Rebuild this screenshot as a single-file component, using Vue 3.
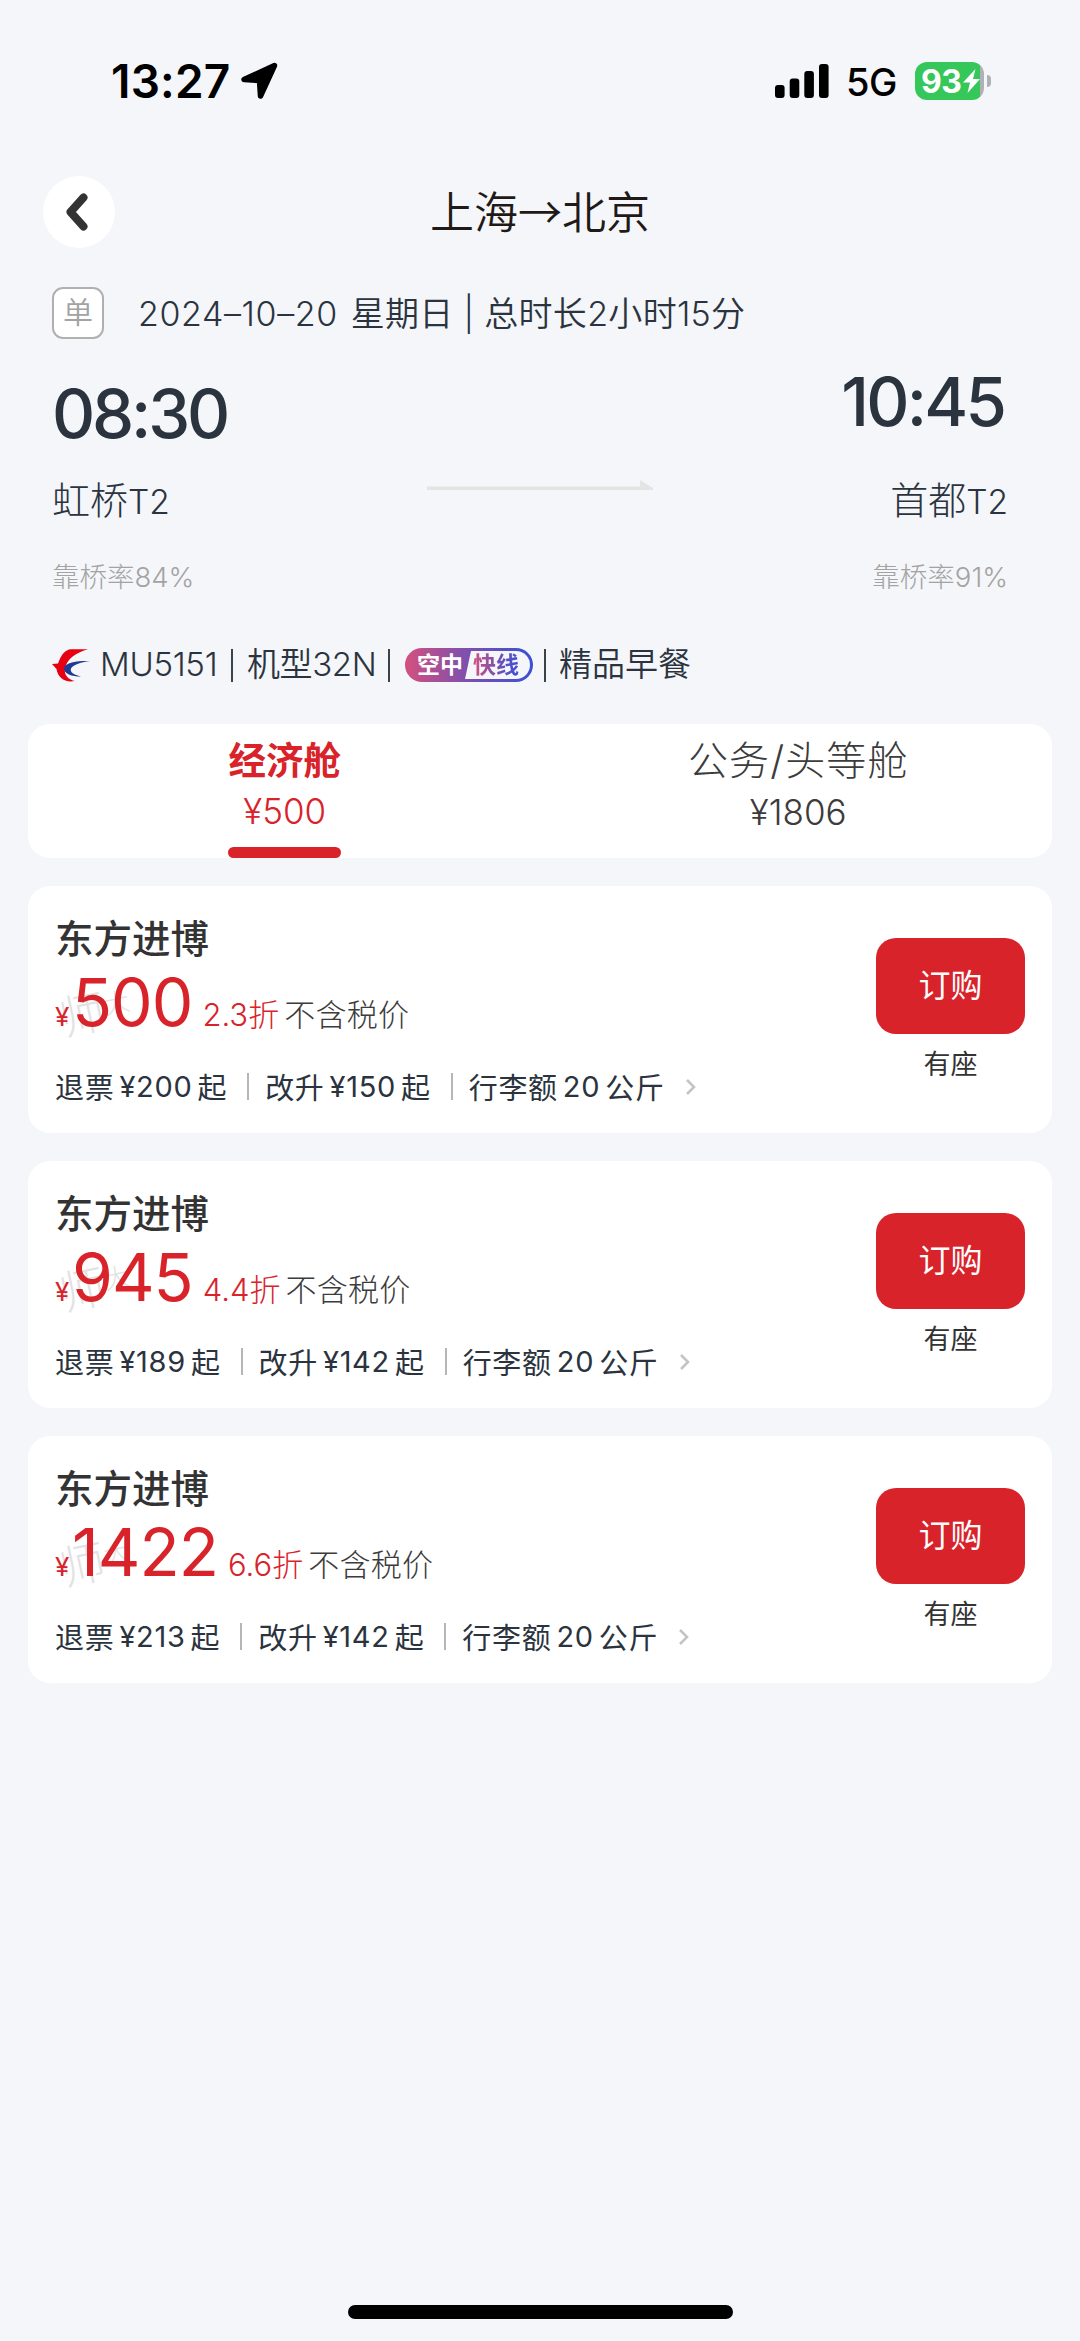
<script setup>
const fares = [
  { name: '东方进博', price: '500', discount: '2.3折', refund: '200', change: '150' },
  { name: '东方进博', price: '945', discount: '4.4折', refund: '189', change: '142' },
  { name: '东方进博', price: '1422', discount: '6.6折', refund: '213', change: '142' },
]
</script>

<template>
  <div class="page">
    <header class="status">
      <div class="clock">
        <span class="time">13:27</span>
        <svg class="loc" width="38" height="38" viewBox="0 0 38 38">
          <path d="M3 17.500 L33.500 3.500 L19.500 34 L18.500 18.500 Z" stroke="#000" stroke-width="5.500" stroke-linejoin="round" />
        </svg>
      </div>
      <div class="indicators">
        <svg width="54" height="34" viewBox="0 0 54 34">
          <rect x="0" y="21" width="9.6" height="13" rx="3" />
          <rect x="14.7" y="14.5" width="9.6" height="19.5" rx="3" />
          <rect x="29.3" y="7" width="9.6" height="27" rx="3" />
          <rect x="44" y="0" width="9.6" height="34" rx="3" />
        </svg>
        <span class="net">5G</span>
        <div class="battery">
          <span class="level">93</span>
          <svg width="17" height="24" viewBox="0 0 17 24"><path d="M12.5 0 L0 13.5 H7 L4.5 24 L17 10 H10 Z" fill="#fff" /></svg>
        </div>
        <span class="nub"></span>
      </div>
    </header>

    <nav class="bar">
      <button class="back">
        <svg width="22" height="38" viewBox="0 0 22 38">
          <path d="M17.500 4.500 L4.500 19 L17.500 33.500" fill="none" stroke="#333" stroke-width="8" stroke-linecap="round" stroke-linejoin="round" />
        </svg>
      </button>
      <h1>上海→北京</h1>
    </nav>

    <div class="summary">
      <span class="oneway">单</span>
      <span class="date"><span class="day">2024–10–20</span> <span class="week">星期日</span> | 总时长2小时15分</span>
    </div>

    <section class="route">
      <div class="stop left">
        <div class="hour">08:30</div>
        <div class="airport">虹桥<span>T2</span></div>
        <div class="rate">靠桥率84%</div>
      </div>
      <svg class="arrow" width="226" height="10" viewBox="0 0 226 10">
        <path d="M0 6.5 H213 V0 L226 8 V10 H0 Z" fill="#e4e4e4" />
      </svg>
      <div class="stop right">
        <div class="hour">10:45</div>
        <div class="airport">首都<span>T2</span></div>
        <div class="rate">靠桥率91%</div>
      </div>
    </section>

    <section class="flight">
      <svg class="logo" width="38" height="33" viewBox="0 0 38 33">
        <path d="M0 15 L6 14.500 C8 9 11 3 15 1.500 Q16.500 0.300 19 0.300 H36 C27 3 19 7 15 14 C10 23 14 30 23 32 C13 34 6 29 4.500 20 Z" fill="#e60012" />
        <path d="M38 12 C28 11.500 13 13 12 19 C11.500 25 20 27.500 29 27.500 C22 26 17.500 23 19 19.500 C21 16 28 13.500 38 12 Z" fill="#1d3a94" />
      </svg>
      <span class="no">MU5151</span>
      <i></i>
      <span class="type">机型32N</span>
      <i></i>
      <span class="express"><b class="air">空中</b><span class="line"><b>快线</b></span></span>
      <i></i>
      <span class="meal">精品早餐</span>
    </section>

    <section class="tabs">
      <div class="tab active">
        <div class="cabin">经济舱</div>
        <div class="from">¥500</div>
        <div class="underline"></div>
      </div>
      <div class="tab">
        <div class="cabin">公务/头等舱</div>
        <div class="from">¥1806</div>
      </div>
    </section>

    <section v-for="(f, i) in fares" :key="i" class="fare">
      <div class="info">
        <div class="name">{{ f.name }}</div>
        <div class="price">
          <span class="mark">师<small>大</small></span>
          <span class="yen">¥</span><span class="amount">{{ f.price }}</span>
          <span class="discount">{{ f.discount }}</span>
          <span class="tax">不含税价</span>
        </div>
        <div class="rules">
          <span>退票</span><span class="num">¥{{ f.refund }}</span><span>起</span>
          <i></i>
          <span>改升</span><span class="num">¥{{ f.change }}</span><span>起</span>
          <i></i>
          <span>行李额</span><span class="num">20</span><span>公斤</span>
          <svg class="more" width="10" height="16" viewBox="0 0 10 16"><path d="M1 1 L8 8 L1 15" fill="none" stroke="#c4c4c4" stroke-width="2.600" /></svg>
        </div>
      </div>
      <div class="action">
        <button class="book">订购</button>
        <div class="seat">有座</div>
      </div>
    </section>

    <footer class="home"><span></span></footer>
  </div>
</template>

<style>
body {
  background: #f4f6fa;
}
</style>

<style scoped>
.page {
  width: 1080px;
  height: 2341px;
  box-sizing: border-box;
  display: flex;
  flex-direction: column;
  overflow: hidden;
  background: #f4f6fa;
  color: #2b343e;
  font-family: Inter, "Noto Sans CJK SC", sans-serif;
  font-weight: 350;
  white-space: nowrap;
}
button {
  border: 0;
  padding: 0;
  font-family: inherit;
}
.status {
  display: flex;
  justify-content: space-between;
  align-items: center;
  height: 162px;
  padding: 0 89px 0 111px;
  color: #000;
}
.clock {
  display: flex;
  align-items: center;
  gap: 10px;
}
.time {
  font-size: 46px;
  font-weight: 600;
  width: 120px;
  letter-spacing: 0.2px;
}
.indicators {
  display: flex;
  align-items: center;
}
.net {
  margin-left: 17px;
  width: 51px;
  margin-right: 18px;
  font-size: 38px;
  font-weight: 500;
  line-height: 44px;
  padding-top: 2px;
  letter-spacing: -0.5px;
}
.battery {
  width: 69px;
  height: 38px;
  box-sizing: border-box;
  padding-left: 6px;
  border-radius: 12px;
  background: linear-gradient(90deg, #35c759 65px, #b0b1b4 65px);
  display: flex;
  align-items: center;
  gap: 1px;
}
.level {
  color: #fff;
  font-size: 32px;
  font-weight: 700;
  letter-spacing: -0.5px;
  width: 41px;
}
.nub {
  width: 4px;
  height: 12px;
  margin-left: 3px;
  border-radius: 0 4px 4px 0;
  background: #b0b1b4;
}
.bar {
  display: grid;
  grid-template-columns: 72px 1fr 72px;
  align-items: center;
  height: 99px;
  padding: 0 43px;
}
.back {
  width: 72px;
  height: 72px;
  border-radius: 50%;
  background: #fff;
  display: flex;
  align-items: center;
  justify-content: center;
  padding-right: 5px;
}
h1 {
  margin: 0 0 3px;
  text-align: center;
  font: 350 44px/60px "Noto Sans CJK SC", sans-serif;
  color: #1f1a17;
}
.summary {
  display: flex;
  align-items: center;
  height: 52px;
  margin-top: 26px;
  padding-left: 52px;
}
.oneway {
  width: 52px;
  height: 52px;
  box-sizing: border-box;
  border: 2px solid #b0b0b0;
  border-radius: 11px;
  background: #fff;
  color: #a3a3a3;
  font-size: 30px;
  line-height: 47px;
  text-align: center;
}
.date {
  margin: -4px 0 0 34px;
  font-size: 34px;
  letter-spacing: 0.3px;
}
.day {
  letter-spacing: 0.6px;
}
.week {
  margin-left: 3px;
}
.route {
  display: flex;
  height: 270px;
  padding: 0 72px 0 52px;
  align-items: flex-start;
}
.left {
  width: 375px;
}
.hour {
  margin-top: 43px;
  font-size: 67px;
  line-height: 64px;
  font-weight: 500;
  letter-spacing: -3.2px;
}
.airport {
  margin-top: 29px;
  font-size: 38px;
  line-height: 50px;
  font-weight: 300;
}
.airport span {
  font-size: 33.5px;
}
.rate {
  margin-top: 30px;
  font-size: 27.5px;
  line-height: 40px;
  font-weight: 300;
  color: #a3a3a3;
}
.right {
  flex: 1;
  text-align: right;
}
.right .hour {
  margin-top: 31px;
  padding-right: 4px;
  letter-spacing: -2.800px;
}
.right .airport {
  margin-top: 41px;
}
.arrow {
  margin-top: 141px;
}
.flight {
  display: flex;
  align-items: center;
  height: 40px;
  margin-top: 36px;
  padding-left: 52px;
  font-size: 33px;
}
.flight i {
  width: 2px;
  height: 33px;
  background: #3a434c;
}
.no,
.type,
.meal {
  line-height: 40px;
  margin-top: -2px;
}
.no {
  margin-left: 10px;
  width: 131px;
  letter-spacing: -0.3px;
}
.type {
  margin-left: 14px;
  width: 141px;
  letter-spacing: -0.4px;
}
.express {
  margin: 0 11px 0 15px;
  width: 128px;
  height: 34px;
  box-sizing: border-box;
  border-radius: 17px;
  padding: 3px;
  display: flex;
  background: linear-gradient(90deg, #d4507e, #7a50b0 50%, #3a4fd8);
  font-size: 23px;
  line-height: 28px;
}
.air {
  width: 57px;
  padding-left: 9px;
  box-sizing: border-box;
  color: #fff;
}
.line {
  width: 65px;
  padding-left: 8px;
  box-sizing: border-box;
  background: #f4f6fa;
  border-radius: 5px 14px 14px 0;
  clip-path: polygon(6px 0, 100% 0, 100% 100%, 0 100%);
}
.line b {
  background: linear-gradient(90deg, #d4507e, #7a50b0 50%, #3a4fd8);
  background-clip: text;
  color: transparent;
}
.meal {
  margin-left: 13px;
}
.tabs {
  display: flex;
  height: 134px;
  margin: 39px 28px 0;
  border-radius: 22px;
  background: #fff;
}
.tab {
  flex: 1;
  display: flex;
  flex-direction: column;
  align-items: center;
  color: #3c3c3c;
}
.tab:last-child {
  padding-left: 6px;
}
.cabin {
  margin-top: 12px;
  font-size: 40px;
  line-height: 50px;
  font-weight: 300;
  letter-spacing: 1.1px;
}
.from {
  margin-top: 3px;
  font-size: 35px;
  line-height: 46px;
}
.active {
  padding-left: 3px;
  color: #d9232b;
}
.active .cabin {
  font-size: 37.5px;
  font-weight: 700;
  letter-spacing: 0;
}
.active .from {
  margin-top: 2px;
}
.underline {
  width: 113px;
  height: 11px;
  margin-top: 13px;
  border-radius: 6px;
  background: #d9232b;
}
.fare {
  display: flex;
  justify-content: space-between;
  height: 247px;
  margin: 28px 28px 0;
  box-sizing: border-box;
  padding: 0 27px;
  border-radius: 22px;
  background: #fff;
}
.name {
  margin-top: 28px;
  font-size: 38.5px;
  line-height: 50px;
  font-weight: 500;
  color: #333;
}
.price {
  position: relative;
  display: flex;
  align-items: baseline;
  height: 77px;
  line-height: 77px;
  color: #d9232b;
}
.mark {
  position: absolute;
  left: 4px;
  top: 23px;
  color: #e2e2e2;
  font-size: 46px;
  line-height: 50px;
  font-weight: 300;
  transform: rotate(-12deg);
}
.mark small {
  font-size: 26px;
  vertical-align: 12px;
  line-height: 1;
}
.yen {
  font-size: 26px;
  font-weight: 400;
  position: relative;
  width: 18px;
}
.amount {
  font-size: 66px;
  font-weight: 400;
  letter-spacing: -1px;
  margin-left: -1px;
  position: relative;
}
.discount {
  margin-left: 10px;
  font-size: 31px;
  font-weight: 300;
}
.tax {
  margin-left: 5px;
  font-size: 31px;
  font-weight: 300;
  letter-spacing: 0.3px;
  color: #3c3c3c;
}
.rules {
  display: flex;
  align-items: center;
  height: 40px;
  margin-top: 25px;
  font-size: 29px;
  letter-spacing: 0.7px;
  font-weight: 400;
}
.num {
  margin: 0 5px;
}
.rules i {
  width: 2px;
  height: 27px;
  margin: 0 16px 0 20px;
  background: #b4b7ba;
}
.more {
  margin: 2px 0 0 21px;
}
.action {
  width: 149px;
  display: flex;
  flex-direction: column;
  align-items: center;
}
.book {
  width: 149px;
  height: 96px;
  margin-top: 52px;
  padding-bottom: 6px;
  border-radius: 20px;
  background: #d9232b;
  color: #fff;
  font-size: 32px;
}
.seat {
  margin-top: 11px;
  font-size: 27px;
  line-height: 40px;
  font-weight: 400;
  color: #333;
}
.home {
  margin-top: auto;
  display: flex;
  justify-content: center;
  height: 36px;
}
.home span {
  width: 385px;
  height: 14px;
  border-radius: 7px;
  background: #000;
}
</style>
